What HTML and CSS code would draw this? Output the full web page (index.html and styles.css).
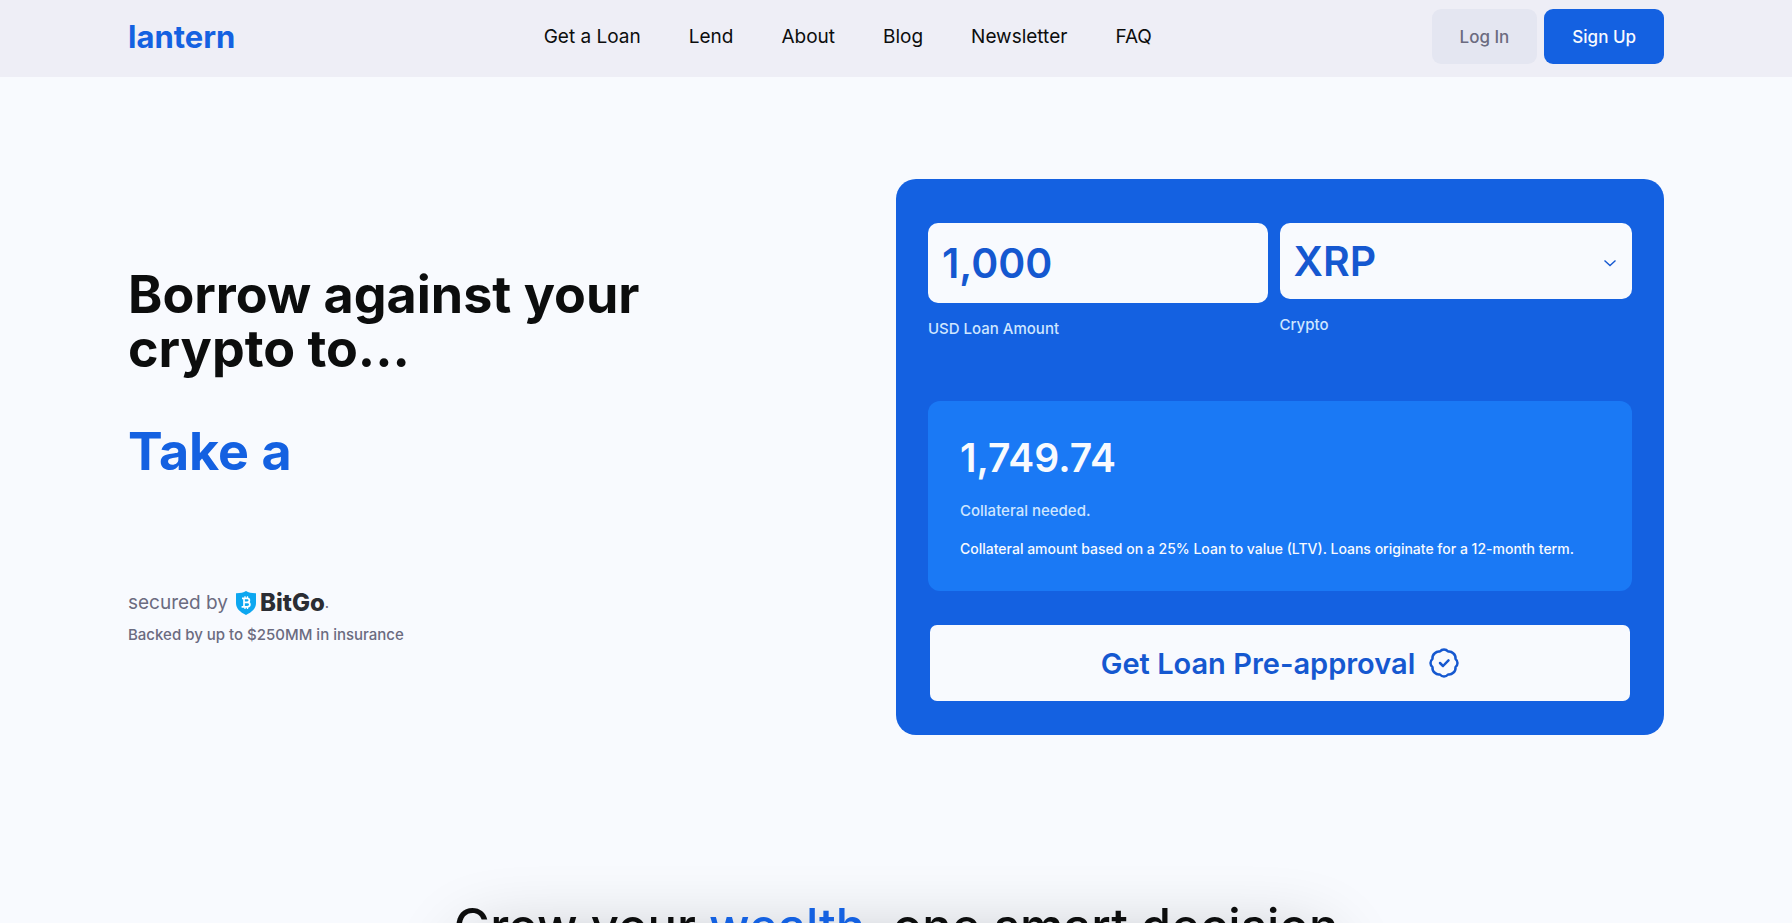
FILE: index.html
```html
<!DOCTYPE html>
<html lang="en">
<head>
    <title>Lantern</title>
    <meta charset="UTF-8">
    <meta name="viewport" content="width=device-width, initial-scale=1.0">
    <link rel="stylesheet" href="styles.css">
</head>
<body>
    <header class="header">
        <div class="container header-inner">
            <a class="logo" href="#">lantern</a>
            <nav class="nav">
                <a href="#">Get a Loan</a>
                <a href="#">Lend</a>
                <a href="#">About</a>
                <a href="#">Blog</a>
                <a href="#">Newsletter</a>
                <a href="#">FAQ</a>
            </nav>
            <div class="header-buttons">
                <button class="btn btn-login" type="button">Log In</button>
                <button class="btn btn-signup" type="button">Sign Up</button>
            </div>
        </div>
    </header>

    <main>
        <section class="container hero">
            <div class="hero-text">
                <h1>Borrow against your<br>crypto to...</h1>
                <p class="typed">Take a</p>
                <div class="secured">
                    <span>secured by</span>
                    <span class="bitgo">
                        <svg width="20" height="24" viewBox="0 0 20 24" aria-hidden="true">
                            <path d="M10 0C12.500 1.500 16 2.300 20 2.200V12C20 17.500 16 21 10 24C4 21 0 17.500 0 12V2.200C4 2.300 7.500 1.500 10 0Z" fill="#0da7f0"/>
                            <g fill="none" stroke="#fff" stroke-width="1.700">
                                <path d="M6 7.300H11.200C14.100 7.300 14.100 11.300 11.200 11.300H8M11.200 11.300C14.800 11.300 14.800 15.900 11.200 15.900H5.600M8 7.300V15.900"/>
                                <path d="M9 5.300V7.300M11.500 5.300V7.300M9 15.900V17.900M11.500 15.900V17.900" stroke-width="1.300"/>
                            </g>
                        </svg>
                        <span class="bitgo-name">BitGo</span><span class="bitgo-dot">.</span>
                    </span>
                </div>
                <p class="backed">Backed by up to $250MM in insurance</p>
            </div>

            <form class="calculator">
                <div class="fields">
                    <div class="field field-amount">
                        <input id="amount" class="amount" type="text" value="1,000">
                        <label for="amount">USD Loan Amount</label>
                    </div>
                    <div class="field field-crypto">
                        <div class="select-wrap">
                            <select id="crypto">
                                <option>XRP</option>
                                <option>BTC</option>
                                <option>ETH</option>
                            </select>
                            <svg class="chevron" width="14" height="8" viewBox="0 0 14 8" aria-hidden="true">
                                <path d="M1.500 1.500L7 6.500L12.500 1.500" fill="none" stroke="#1558d0" stroke-width="1.400"/>
                            </svg>
                        </div>
                        <label for="crypto">Crypto</label>
                    </div>
                </div>

                <div class="result">
                    <p class="result-amount">1,749.74</p>
                    <p class="result-label">Collateral needed.</p>
                    <p class="result-note">Collateral amount based on a 25% Loan to value (LTV). Loans originate for a 12-month term.</p>
                </div>

                <button class="approve" type="button">
                    <span>Get Loan Pre-approval</span>
                    <svg width="30" height="30" viewBox="0 0 30 30" fill="none" stroke="#1558d0" stroke-width="2.500" stroke-linecap="round" stroke-linejoin="round" aria-hidden="true">
                        <path d="M15 1.500Q17.400 1.500 19.100 3.500Q21.900 2.900 24.500 5.500Q26.900 7.600 26.500 10.900Q28.500 12.700 28.500 15Q28.500 17.300 26.500 19.100Q26.900 22.400 24.500 24.500Q21.900 27.100 19.100 26.500Q17.400 28.500 15 28.500Q12.600 28.500 10.900 26.500Q8.100 27.100 5.500 24.500Q3.100 22.400 3.500 19.100Q1.500 17.300 1.500 15Q1.500 12.700 3.500 10.900Q3.100 7.600 5.500 5.500Q8.100 2.900 10.900 3.500Q12.600 1.500 15 1.500Z"/>
                        <path d="M11 15L14 18L19.500 12.300"/>
                    </svg>
                </button>
            </form>
        </section>

        <section class="growth">
            <h2>Grow your <span>wealth</span>, one smart decision</h2>
        </section>
    </main>
</body>
</html>
```

FILE: styles.css
```css
* {
    box-sizing: border-box;
}
body {
    margin: 0;
    background-color: #f8fafe;
    color: #0c0d0d;
    font-family: 'Inter', sans-serif;
    font-size: 16px;
    overflow-x: hidden;
}
h1, h2, p {
    margin: 0;
}
a {
    color: inherit;
    text-decoration: none;
}
button, input, select {
    font-family: inherit;
}
.container {
    max-width: 1536px;
    margin: 0 auto;
}

/* header */
.header {
    background-color: #eeeef6;
    padding: 9px 0 13px;
}
.header-inner {
    display: flex;
    justify-content: space-between;
    align-items: center;
}
.logo {
    width: 136px;
    color: #1461e1;
    font-size: 31px;
    font-weight: 700;
    line-height: 40px;
}
.nav {
    display: flex;
    gap: 48px;
    font-size: 19px;
}
.header-buttons {
    display: flex;
    gap: 7px;
}
.btn {
    height: 55px;
    padding: 0 28px;
    border: none;
    border-radius: 9px;
    font-size: 17px;
    font-weight: 500;
    cursor: pointer;
}
.btn-login {
    background-color: #e4e6f1;
    color: #6b6b80;
}
.btn-signup {
    background-color: #1461e1;
    color: #f8fafe;
}

/* hero */
.hero {
    display: grid;
    grid-template-columns: 1fr 1fr;
    align-items: center;
    padding: 102px 0 160px;
}
h1, .typed {
    font-size: 52px;
    font-weight: 700;
    line-height: 54px;
}
.typed {
    margin-top: 49px;
    color: #1461e1;
}
.secured {
    display: flex;
    align-items: center;
    gap: 8px;
    margin-top: 108px;
    color: #6b6b80;
    font-size: 19px;
    line-height: 32px;
}
.bitgo {
    display: flex;
    align-items: center;
}
.bitgo-name {
    margin-left: 4px;
    color: #2b2d33;
    font-size: 24px;
    font-weight: 800;
}
.bitgo-dot {
    font-size: 15px;
}
.backed {
    margin-top: 4px;
    color: #6b6b80;
    font-size: 15px;
    font-weight: 500;
    line-height: 24px;
}

/* calculator */
.calculator {
    padding: 44px 32px 34px;
    border-radius: 20px;
    background-color: #1461e1;
}
.fields {
    display: flex;
    align-items: flex-start;
    gap: 12px;
}
.field-amount {
    flex: 340;
}
.field-crypto {
    flex: 353;
}
.field label {
    display: block;
    margin-top: 14px;
    color: #cfe6ff;
    font-size: 15px;
    font-weight: 500;
    line-height: 24px;
}
.amount, select {
    display: block;
    width: 100%;
    padding: 0 14px;
    border: none;
    border-radius: 10px;
    background-color: #f8fafe;
    color: #1558d0;
    font-size: 41px;
    font-weight: 600;
}
.amount {
    height: 80px;
}
select {
    height: 76px;
    appearance: none;
}
.select-wrap {
    position: relative;
}
.chevron {
    position: absolute;
    right: 15px;
    top: 36px;
}
.result {
    margin-top: 60px;
    padding: 30px 32px;
    border-radius: 12px;
    background-color: #1a79f5;
    color: #f8fafe;
}
.result-amount {
    font-size: 39px;
    font-weight: 600;
    line-height: 54px;
}
.result-label {
    margin-top: 14px;
    color: #cfe6ff;
    font-size: 15px;
    font-weight: 500;
    line-height: 24px;
}
.result-note {
    margin-top: 14px;
    font-size: 14px;
    font-weight: 500;
    line-height: 24px;
}
.approve {
    display: flex;
    justify-content: center;
    align-items: center;
    gap: 14px;
    width: calc(100% - 4px);
    height: 76px;
    margin: 34px 2px 0;
    border: none;
    border-radius: 7px;
    background-color: #f8fafe;
    color: #1558d0;
    font-size: 29px;
    font-weight: 600;
    cursor: pointer;
}

/* growth section */
.growth {
    position: relative;
    text-align: center;
}
.growth::before {
    content: "";
    position: absolute;
    z-index: -1;
    top: 44px;
    left: 50%;
    width: 860px;
    height: 400px;
    margin-left: -430px;
    border-radius: 20px;
    box-shadow: 0 0 72px rgba(0, 0, 0, 0.24);
}
h2 {
    font-size: 49px;
    font-weight: 500;
    line-height: 64px;
}
h2 span {
    color: #1461e1;
}
```
